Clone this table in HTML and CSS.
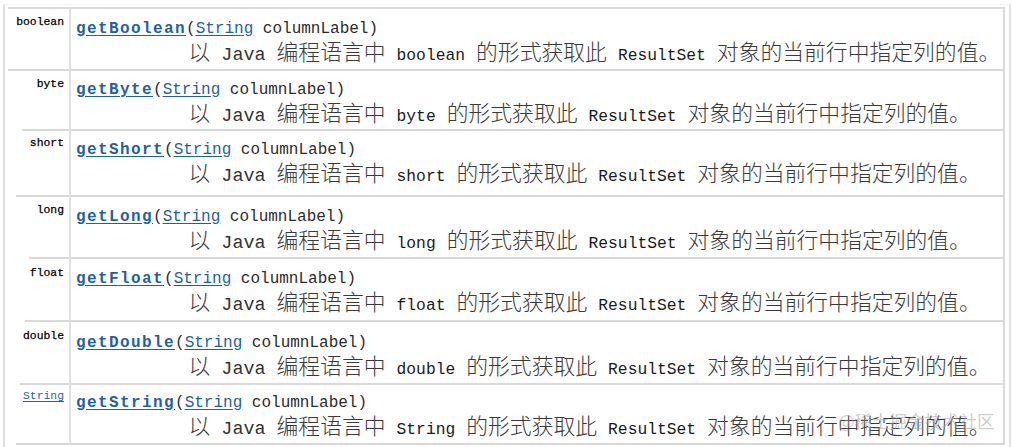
FILE: index.html
```html
<!DOCTYPE html>
<html lang="zh">
<head>
<meta charset="utf-8">
<title>ResultSet getters</title>
<link rel="stylesheet" href="styles.css">
</head>
<body>
<div class="page">
  <div class="summary">
    <div class="row r1">
      <div class="type">boolean</div>
      <div class="detail">
        <div class="sig"><a class="name">getBoolean</a>(<a class="ref">String</a> columnLabel)</div>
        <div class="desc"><span class="zh">以</span> Java <span class="zh">编程语言中</span> <code>boolean</code> <span class="zh">的形式获取此</span> <code>ResultSet</code> <span class="zh">对象的当前行中指定列的值。</span></div>
      </div>
    </div>
    <div class="row r2">
      <div class="type">byte</div>
      <div class="detail">
        <div class="sig"><a class="name">getByte</a>(<a class="ref">String</a> columnLabel)</div>
        <div class="desc"><span class="zh">以</span> Java <span class="zh">编程语言中</span> <code>byte</code> <span class="zh">的形式获取此</span> <code>ResultSet</code> <span class="zh">对象的当前行中指定列的值。</span></div>
      </div>
    </div>
    <div class="row r3">
      <div class="type">short</div>
      <div class="detail">
        <div class="sig"><a class="name">getShort</a>(<a class="ref">String</a> columnLabel)</div>
        <div class="desc"><span class="zh">以</span> Java <span class="zh">编程语言中</span> <code>short</code> <span class="zh">的形式获取此</span> <code>ResultSet</code> <span class="zh">对象的当前行中指定列的值。</span></div>
      </div>
    </div>
    <div class="row r4">
      <div class="type">long</div>
      <div class="detail">
        <div class="sig"><a class="name">getLong</a>(<a class="ref">String</a> columnLabel)</div>
        <div class="desc"><span class="zh">以</span> Java <span class="zh">编程语言中</span> <code>long</code> <span class="zh">的形式获取此</span> <code>ResultSet</code> <span class="zh">对象的当前行中指定列的值。</span></div>
      </div>
    </div>
    <div class="row r5">
      <div class="type">float</div>
      <div class="detail">
        <div class="sig"><a class="name">getFloat</a>(<a class="ref">String</a> columnLabel)</div>
        <div class="desc"><span class="zh">以</span> Java <span class="zh">编程语言中</span> <code>float</code> <span class="zh">的形式获取此</span> <code>ResultSet</code> <span class="zh">对象的当前行中指定列的值。</span></div>
      </div>
    </div>
    <div class="row r6">
      <div class="type">double</div>
      <div class="detail">
        <div class="sig"><a class="name">getDouble</a>(<a class="ref">String</a> columnLabel)</div>
        <div class="desc"><span class="zh">以</span> Java <span class="zh">编程语言中</span> <code>double</code> <span class="zh">的形式获取此</span> <code>ResultSet</code> <span class="zh">对象的当前行中指定列的值。</span></div>
      </div>
    </div>
    <div class="row r7">
      <div class="type"><a class="ref">String</a></div>
      <div class="detail">
        <div class="sig"><a class="name">getString</a>(<a class="ref">String</a> columnLabel)</div>
        <div class="desc"><span class="zh">以</span> Java <span class="zh">编程语言中</span> <code>String</code> <span class="zh">的形式获取此</span> <code>ResultSet</code> <span class="zh">对象的当前行中指定列的值。</span></div>
      </div>
    </div>
  </div>
</div>
<div class="watermark">@稀土掘金技术社区</div>
</body>
</html>
```

FILE: styles.css
```css
* {
  box-sizing: border-box;
}

html,
body {
  margin: 0;
  background: #fff;
}

body {
  position: relative;
  width: 1012px;
  height: 447px;
  overflow: hidden;
  color: #262626;
}

.page {
  margin: 4px 0 0 3px;
  width: 1008px;
  height: 443px;
  border-left: 2px solid #dedede;
  border-right: 2px solid #e4e4e4;
  border-top: 1px solid #f2f2f2;
  padding: 2px 4px 0 3px;
}

.summary {
  border-right: 2px solid #d9d9d9;
  padding-bottom: 2px;
  background: linear-gradient(#d6d6d6, #d6d6d6) right bottom / calc(100% - 8px) 2px no-repeat;
}

.row {
  display: grid;
  grid-template-columns: 63px 1fr;
  height: var(--h);
}

.type {
  border-right: 2px solid #e0e0e0;
  padding: calc(7.5px + var(--s)) 5px 0 0;
  text-align: right;
  font: 11.4px/14px "Liberation Mono", monospace;
  color: #000;
  -webkit-text-stroke: 0.25px #000;
  background: linear-gradient(#d9d9d9, #d9d9d9) right top / calc(100% - var(--cut)) 2px no-repeat;
}

.type .ref {
  -webkit-text-stroke: 0;
}

.detail {
  border-top: 2px solid #d9d9d9;
  padding: calc(9px + var(--s)) 0 0 5px;
  white-space: nowrap;
}

.sig {
  height: 20px;
  font: 16px/20px "Liberation Mono", monospace;
  color: #2b2b2b;
}

a {
  color: #1f5fa8;
  text-decoration: underline;
  text-underline-offset: 2px;
}

.name {
  font-weight: bold;
  letter-spacing: 1.4px;
}

.desc {
  height: 24px;
  margin-left: 112.5px;
  font: 18.4px/24px "Liberation Mono", "Noto Sans CJK SC", monospace;
  color: #333;
}

.zh {
  font-family: "Noto Sans CJK SC", sans-serif;
  font-size: 21.8px;
  font-weight: 300;
  line-height: 24px;
  color: #3a3a3a;
}

.desc code {
  font: 16.3px "Liberation Mono", monospace;
  color: #1a1a1a;
}

.r1 { --h: 62px; --s: 0.5px; --cut: 0px; }
.r2 { --h: 60px; --s: 0px; --cut: 0px; }
.r3 { --h: 66px; --s: -0.5px; --cut: 14px; }
.r4 { --h: 62px; --s: 0.5px; --cut: 8px; }
.r5 { --h: 63px; --s: 1px; --cut: 21px; }
.r6 { --h: 63px; --s: 1.5px; --cut: 17px; }
.r7 { --h: 60px; --s: -1.5px; --cut: 12px; }

.watermark {
  position: absolute;
  left: 838px;
  top: 410px;
  font: 17.5px/22px "Noto Sans CJK SC", sans-serif;
  color: rgba(160, 160, 160, 0.55);
  white-space: nowrap;
}
```
